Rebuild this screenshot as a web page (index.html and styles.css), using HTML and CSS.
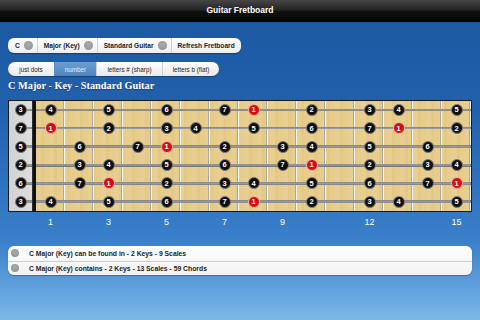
FILE: index.html
```html
<!DOCTYPE html>
<html>
<head>
<meta charset="utf-8">
<link rel="stylesheet" href="styles.css">
</head>
<body>
<header class="topbar">Guitar Fretboard</header>
<main class="main">
  <div class="picker">
    <div class="item">C<span class="knob"></span></div>
    <div class="item">Major (Key)<span class="knob"></span></div>
    <div class="item">Standard Guitar<span class="knob"></span></div>
    <div class="item">Refresh Fretboard</div>
  </div>
  <div class="tabs">
    <div class="tab w1">just dots</div>
    <div class="tab w2 on">number</div>
    <div class="tab w3">letters # (sharp)</div>
    <div class="tab w4">letters b (flat)</div>
  </div>
  <h1 class="title">C Major - Key - Standard Guitar</h1>
  <div class="board">
    <div class="open">
      <div class="o"><span class="d">3</span></div>
      <div class="o"><span class="d">7</span></div>
      <div class="o thick"><span class="d">5</span></div>
      <div class="o thick"><span class="d">2</span></div>
      <div class="o thick"><span class="d">6</span></div>
      <div class="o thick"><span class="d">3</span></div>
    </div>
    <div class="nut"></div>
    <div class="neck">
      <div class="s">
        <span class="d f1">4</span><span class="d f3">5</span><span class="d f5">6</span><span class="d f7">7</span><span class="d r f8">1</span><span class="d f10">2</span><span class="d f12">3</span><span class="d f13">4</span><span class="d f15">5</span>
      </div>
      <div class="s">
        <span class="d r f1">1</span><span class="d f3">2</span><span class="d f5">3</span><span class="d f6">4</span><span class="d f8">5</span><span class="d f10">6</span><span class="d f12">7</span><span class="d r f13">1</span><span class="d f15">2</span>
      </div>
      <div class="s thick">
        <span class="d f2">6</span><span class="d f4">7</span><span class="d r f5">1</span><span class="d f7">2</span><span class="d f9">3</span><span class="d f10">4</span><span class="d f12">5</span><span class="d f14">6</span>
      </div>
      <div class="s thick">
        <span class="d f2">3</span><span class="d f3">4</span><span class="d f5">5</span><span class="d f7">6</span><span class="d f9">7</span><span class="d r f10">1</span><span class="d f12">2</span><span class="d f14">3</span><span class="d f15">4</span>
      </div>
      <div class="s thick">
        <span class="d f2">7</span><span class="d r f3">1</span><span class="d f5">2</span><span class="d f7">3</span><span class="d f8">4</span><span class="d f10">5</span><span class="d f12">6</span><span class="d f14">7</span><span class="d r f15">1</span>
      </div>
      <div class="s thick">
        <span class="d f1">4</span><span class="d f3">5</span><span class="d f5">6</span><span class="d f7">7</span><span class="d r f8">1</span><span class="d f10">2</span><span class="d f12">3</span><span class="d f13">4</span><span class="d f15">5</span>
      </div>
    </div>
  </div>
  <div class="nums">
    <span class="f1">1</span><span class="f3">3</span><span class="f5">5</span><span class="f7">7</span><span class="f9">9</span><span class="f12">12</span><span class="f15">15</span>
  </div>
  <div class="info">
    <div class="row"><span class="knob"></span>C Major (Key) can be found in - 2 Keys - 9 Scales</div>
    <div class="row"><span class="knob"></span>C Major (Key) contains - 2 Keys - 13 Scales - 59 Chords</div>
  </div>
</main>
</body>
</html>
```
FILE: styles.css
```css
* { box-sizing: border-box; }
html, body { margin: 0; padding: 0; }
body {
  width: 480px;
  height: 320px;
  overflow: hidden;
  font-family: "Liberation Sans", Arial, sans-serif;
  background: #1c59a3;
}
.topbar {
  height: 22px;
  background: linear-gradient(#464646, #262626 45%, #111 55%, #050505);
  border-bottom: 1px solid #000;
  color: #fff;
  font-weight: bold;
  font-size: 8.5px;
  line-height: 21px;
  text-align: center;
}
.main {
  height: 298px;
  padding: 16px 8px 0;
  display: flex;
  flex-direction: column;
  align-items: flex-start;
  background: linear-gradient(#1c59a3 0px, #2261ad 90px, #3a80cb 220px, #7cb9e9 298px);
}
.picker {
  display: flex;
  height: 15px;
  background: linear-gradient(#ffffff, #ededed);
  border-radius: 6px;
  box-shadow: 0 1px 1px rgba(0, 0, 0, 0.35);
  font-size: 6.6px;
  font-weight: bold;
  color: #222;
}
.picker .item {
  display: flex;
  align-items: center;
  gap: 4px;
  padding: 0 4px 0 6px;
  border-left: 1px solid #d2d2d2;
}
.picker .item:first-child { border-left: 0; padding-left: 7px; }
.picker .item:last-child { padding-right: 6px; }
.knob {
  display: inline-block;
  width: 9px;
  height: 9px;
  border-radius: 50%;
  background: radial-gradient(circle at 50% 40%, #ababab, #8e8e8e);
  flex: none;
}
.tabs {
  margin-top: 9px;
  display: flex;
  height: 14px;
  border-radius: 7px;
  overflow: hidden;
  background: linear-gradient(#ffffff, #e9e9e9);
  box-shadow: 0 1px 1px rgba(0, 0, 0, 0.3);
  font-size: 6.3px;
  color: #222;
}
.tab {
  display: flex;
  align-items: center;
  justify-content: center;
  border-left: 1px solid #d0d0d0;
}
.tab.w1 { width: 46px; border-left: 0; }
.tab.w2 { width: 42px; }
.tab.w3 { width: 66px; }
.tab.w4 { width: 57px; }
.tab.on {
  background: linear-gradient(#6a9dd1, #5185bf);
  color: #e4eefa;
  border-left-color: #5a8dc4;
}
.title {
  margin: 2px 0 0;
  font-family: "Liberation Serif", "Times New Roman", serif;
  font-weight: bold;
  font-size: 10.3px;
  line-height: 16px;
  color: #fff;
  text-shadow: 0 1px 1px rgba(0, 0, 0, 0.3);
}
.board {
  margin-top: 6px;
  display: grid;
  grid-template-columns: 23px 4px 435px;
  height: 112px;
  border: 1px solid #1a1a1a;
}
.open {
  background: linear-gradient(to right, #d2d2d2, #dedede);
  display: grid;
  grid-template-rows: repeat(6, 1fr);
}
.nut { background: linear-gradient(to right, #3a3a3a, #111 40%); }
.neck {
  display: grid;
  grid-template-rows: repeat(6, 1fr);
  background:
    repeating-linear-gradient(to right, transparent 0 27px, #a8a8a8 27px 27.5px, #f6f6f6 27.5px 28.5px, #b4b4b4 28.5px 29px),
    repeating-linear-gradient(to right, rgba(255,255,255,0.05) 0 5px, rgba(150,110,40,0.04) 5px 8px, rgba(255,255,255,0) 8px 13px),
    #e7cc8a;
}
.s, .o {
  --w: 1px;
  background: linear-gradient(to bottom, transparent calc(50% - var(--w)), #8a8a8a calc(50% - var(--w)), #9a9a9a 50%, #7c7c7c calc(50% + var(--w)), transparent calc(50% + var(--w)));
}
.thick { --w: 1.5px; }
.s {
  display: grid;
  grid-template-columns: repeat(15, 29px);
  align-items: center;
  justify-items: center;
}
.o {
  display: flex;
  align-items: center;
  justify-content: center;
  background-size: 50% 100%;
  background-position: right center;
  background-repeat: no-repeat;
}
.d {
  grid-row: 1;
  width: 12px;
  height: 12px;
  border-radius: 50%;
  background: #0e0e0e;
  border: 1px solid #7a7a7a;
  color: #fff;
  font-size: 7.5px;
  font-weight: bold;
  line-height: 1;
  display: flex;
  align-items: center;
  justify-content: center;
}
.d.r {
  background: #d40d0d;
  border-color: #f0b4b4;
}
.f1 { grid-column: 1; }
.f2 { grid-column: 2; }
.f3 { grid-column: 3; }
.f4 { grid-column: 4; }
.f5 { grid-column: 5; }
.f6 { grid-column: 6; }
.f7 { grid-column: 7; }
.f8 { grid-column: 8; }
.f9 { grid-column: 9; }
.f10 { grid-column: 10; }
.f11 { grid-column: 11; }
.f12 { grid-column: 12; }
.f13 { grid-column: 13; }
.f14 { grid-column: 14; }
.f15 { grid-column: 15; }
.nums {
  margin-top: 1px;
  padding-left: 28px;
  height: 18px;
  display: grid;
  grid-template-columns: repeat(15, 29px);
  align-items: center;
  justify-items: center;
  color: #fff;
  font-size: 9px;
}
.nums span { grid-row: 1; }
.info {
  margin-top: 15px;
  width: 464px;
  background: linear-gradient(#ffffff, #f1f1f1);
  border-radius: 6px;
  box-shadow: 0 1px 1px rgba(0, 0, 0, 0.3);
  font-size: 6.8px;
  font-weight: bold;
  color: #222;
}
.info .row {
  display: flex;
  align-items: center;
  gap: 10px;
  height: 14.5px;
  padding-left: 3px;
}
.info .row + .row { border-top: 1px solid #cfcfcf; }
.info .knob { width: 8px; height: 8px; }
```
